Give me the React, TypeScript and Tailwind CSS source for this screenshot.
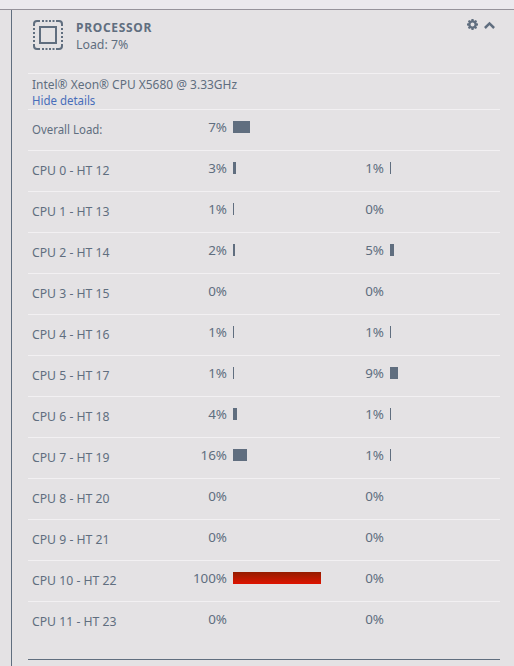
type Reading = { value: number; width: number };
type CpuRow = { label: string; first: Reading; second?: Reading };

const r = (value: number, width: number): Reading => ({ value, width });

const rows: CpuRow[] = [
  { label: "Overall Load:", first: r(7, 17) },
  { label: "CPU 0 - HT 12", first: r(3, 3), second: r(1, 1) },
  { label: "CPU 1 - HT 13", first: r(1, 1), second: r(0, 0) },
  { label: "CPU 2 - HT 14", first: r(2, 2), second: r(5, 4) },
  { label: "CPU 3 - HT 15", first: r(0, 0), second: r(0, 0) },
  { label: "CPU 4 - HT 16", first: r(1, 1), second: r(1, 1) },
  { label: "CPU 5 - HT 17", first: r(1, 1), second: r(9, 8) },
  { label: "CPU 6 - HT 18", first: r(4, 4), second: r(1, 1) },
  { label: "CPU 7 - HT 19", first: r(16, 14), second: r(1, 1) },
  { label: "CPU 8 - HT 20", first: r(0, 0), second: r(0, 0) },
  { label: "CPU 9 - HT 21", first: r(0, 0), second: r(0, 0) },
  { label: "CPU 10 - HT 22", first: r(100, 88), second: r(0, 0) },
  { label: "CPU 11 - HT 23", first: r(0, 0), second: r(0, 0) },
];

function Load({ value, width }: Reading) {
  return (
    <div className="flex w-[157px] items-start">
      <span className="w-[43px] origin-right scale-x-[1.03] text-right leading-4">{value}%</span>
      <span
        className={
          value === 100
            ? "ml-1.5 mt-0.5 h-3 bg-linear-to-b from-[#941c00] to-[#de1100]"
            : "ml-1.5 mt-0.5 h-3 bg-[#606e7f]"
        }
        style={{ width }}
      />
    </div>
  );
}

function ChipIcon() {
  return (
    <svg width="30" height="30" viewBox="0 0 30 30" fill="none" stroke="#606e7f" strokeWidth="2" className="shrink-0">
      <path d="M1 6V4a3 3 0 0 1 3-3h3M23 1h3a3 3 0 0 1 3 3v2M29 24v2a3 3 0 0 1-3 3h-3M7 29H4a3 3 0 0 1-3-3v-2" />
      <path d="M9 1h2M12.5 1h2M16 1h2M19.5 1h2M9 29h2M12.5 29h2M16 29h2M19.5 29h2M1 8v2M1 12v2M1 16v2M1 20v2M29 8v2M29 12v2M29 16v2M29 20v2" />
      <path d="M7 7h16v16H7z" />
    </svg>
  );
}

export default function App() {
  return (
    <div className="flex h-[666px] w-[514px] flex-col overflow-hidden bg-[#e4e2e4] font-['Noto_Sans',sans-serif] text-[13px] text-[#606e7f]">
      <div className="h-2.5 shrink-0 border-b border-[#96939c] bg-[#ebe9ee]" />
      <main className="ml-[11px] flex-1 border-l border-[#606e7f] pl-4 pr-3.5">
        <header className="flex h-[63px] pl-[5px] pt-2.5">
          <ChipIcon />
          <div className="ml-[13px] flex-1 whitespace-nowrap">
            <h1 className="h-4 text-[12px] font-bold leading-4 tracking-[0.7px]">PROCESSOR</h1>
            <p className="origin-left scale-x-95 leading-4">Load: 7%</p>
          </div>
          <div className="flex gap-1.5 pr-[5px]">
            <svg width="11" height="11" viewBox="0 0 11 11" className="-mt-px">
              <path
                fill="#606e7f"
                fillRule="evenodd"
                d="M4.5 0h2l.3 1.4.8.3L8.8.9l1.3 1.3-.8 1.2.3.8 1.4.3v2l-1.4.3-.3.8.8 1.2-1.3 1.3-1.2-.8-.8.3L6.5 11h-2l-.3-1.4-.8-.3-1.2.8L.9 8.8l.8-1.2-.3-.8L0 6.5v-2l1.4-.3.3-.8-.8-1.2L2.2.9l1.2.8.8-.3zM5.5 3.5a2 2 0 1 0 0 4 2 2 0 0 0 0-4z"
              />
            </svg>
            <svg width="11" height="11" viewBox="0 0 11 11" fill="none" stroke="#606e7f" strokeWidth="2.5">
              <path d="M.9 8 5.5 3.4l4.6 4.6" />
            </svg>
          </div>
        </header>
        <section className="h-9 whitespace-nowrap border-t border-[#f2f0f2] pl-1 pt-0.5 leading-4">
          <p className="origin-left scale-x-[0.92]">Intel® Xeon® CPU X5680 @ 3.33GHz</p>
          <p className="origin-left scale-x-[0.88] text-[#486dba]">Hide details</p>
        </section>
        {rows.map((row) => (
          <div key={row.label} className="flex h-[41px] border-t border-[#f2f0f2] pl-1 pt-[9px]">
            <span
              className={
                row.second
                  ? "w-[152px] origin-left scale-x-[0.94] pt-0.5 leading-4"
                  : "w-[152px] origin-left scale-x-[0.88] pt-0.5 leading-4"
              }
            >
              {row.label}
            </span>
            <Load {...row.first} />
            {row.second && <Load {...row.second} />}
          </div>
        ))}
        <div className="mt-[17px] border-t border-[#606e7f]" />
      </main>
    </div>
  );
}
